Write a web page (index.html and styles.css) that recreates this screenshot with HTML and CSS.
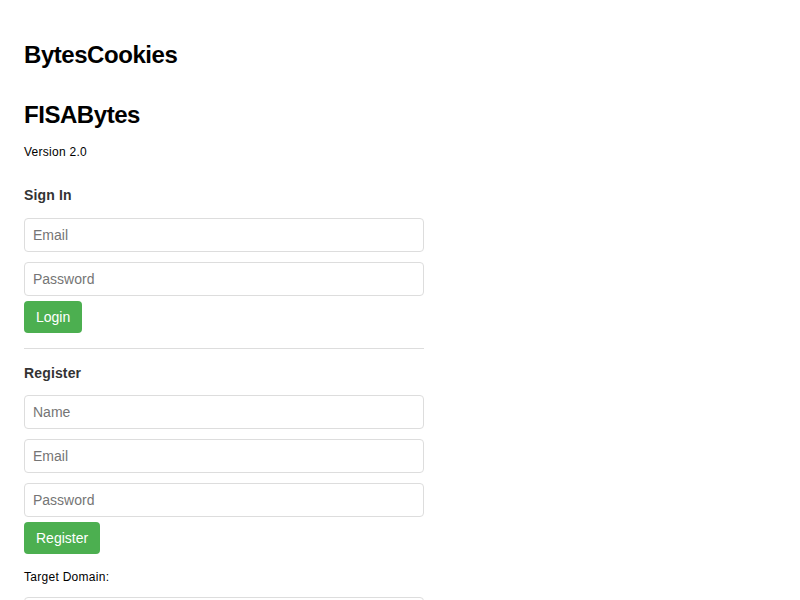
FILE: index.html
```html
<!DOCTYPE html>
<html lang="en">
<head>
<meta charset="utf-8">
<title>BytesCookies</title>
<link rel="stylesheet" href="styles.css">
</head>
<body>
<div class="page">
  <h1 class="title">BytesCookies</h1>
  <h2 class="subtitle">FISABytes</h2>
  <p class="version">Version 2.0</p>

  <section class="block">
    <h3 class="block-title">Sign In</h3>
    <div class="form">
      <input class="field" type="email" placeholder="Email">
      <input class="field" type="password" placeholder="Password">
      <button class="btn" type="button">Login</button>
    </div>
  </section>

  <hr class="divider">

  <section class="block block-register">
    <h3 class="block-title">Register</h3>
    <div class="form">
      <input class="field" type="text" placeholder="Name">
      <input class="field" type="email" placeholder="Email">
      <input class="field" type="password" placeholder="Password">
      <button class="btn" type="button">Register</button>
    </div>
  </section>

  <label class="label" for="domain">Target Domain:</label>
  <input class="field field-domain" id="domain" type="text">
</div>
</body>
</html>
```

FILE: styles.css
```css
html, body {
  margin: 0;
  padding: 0;
  background: #ffffff;
}

body {
  font-family: "Liberation Sans", Arial, Helvetica, sans-serif;
  color: #000;
}

.page {
  padding: 41px 24px 40px;
  width: 400px;
  display: flex;
  flex-direction: column;
}

.title, .subtitle {
  font-size: 24px;
  line-height: 28px;
  font-weight: bold;
  letter-spacing: -0.45px;
  margin: 0;
}

.subtitle {
  margin-top: 32px;
}

.version {
  font-size: 12px;
  line-height: 16px;
  letter-spacing: 0.27px;
  margin: 15px 0 0;
}

.block {
  margin-top: 26px;
}

.block-register {
  margin-top: 15px;
}

.block-title {
  font-size: 14px;
  line-height: 18px;
  font-weight: bold;
  letter-spacing: 0.15px;
  color: #333;
  margin: 0 0 9px;
}

.block-register .block-title {
  margin-bottom: 8px;
}

.form {
  display: flex;
  flex-direction: column;
  align-items: flex-start;
}

.field {
  box-sizing: border-box;
  width: 400px;
  height: 34px;
  margin: 5px 0;
  padding: 0 8px;
  border: 1px solid #dddddd;
  border-radius: 4px;
  font-family: "Liberation Sans", Arial, Helvetica, sans-serif;
  font-size: 14px;
  color: #333;
  background: #fff;
  outline: none;
}

.field::placeholder {
  color: #757575;
}

.btn {
  box-sizing: border-box;
  height: 32px;
  padding: 0 12px;
  border: none;
  border-radius: 4px;
  background: #4caf50;
  color: #fff;
  font-family: "Liberation Sans", Arial, Helvetica, sans-serif;
  font-size: 14px;
  cursor: pointer;
}

.divider {
  width: 400px;
  margin: 15px 0 0;
  border: none;
  border-top: 1px solid #dddddd;
  height: 0;
}

.label {
  font-size: 12px;
  line-height: 16px;
  letter-spacing: 0.28px;
  margin-top: 15px;
}

.field-domain {
  margin-top: 12px;
}
```
